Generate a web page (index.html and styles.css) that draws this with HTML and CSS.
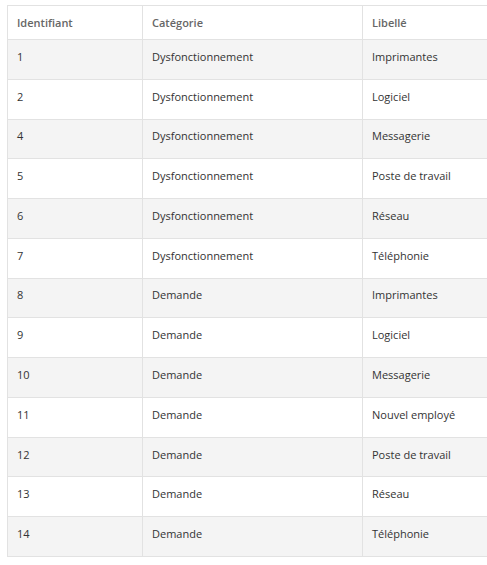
FILE: index.html
```html
<!DOCTYPE html>
<html lang="fr">
<head>
<meta charset="utf-8">
<link rel="stylesheet" href="styles.css">
</head>
<body>
<div class="wrap">
<table class="grid">
<thead>
<tr><th class="c1">Identifiant</th><th class="c2">Catégorie</th><th class="c3">Libellé</th></tr>
</thead>
<tbody>
<tr><td>1</td><td>Dysfonctionnement</td><td>Imprimantes</td></tr>
<tr><td>2</td><td>Dysfonctionnement</td><td>Logiciel</td></tr>
<tr><td>4</td><td>Dysfonctionnement</td><td>Messagerie</td></tr>
<tr><td>5</td><td>Dysfonctionnement</td><td>Poste de travail</td></tr>
<tr><td>6</td><td>Dysfonctionnement</td><td>Réseau</td></tr>
<tr><td>7</td><td>Dysfonctionnement</td><td>Téléphonie</td></tr>
<tr><td>8</td><td>Demande</td><td>Imprimantes</td></tr>
<tr><td>9</td><td>Demande</td><td>Logiciel</td></tr>
<tr><td>10</td><td>Demande</td><td>Messagerie</td></tr>
<tr><td>11</td><td>Demande</td><td>Nouvel employé</td></tr>
<tr><td>12</td><td>Demande</td><td>Poste de travail</td></tr>
<tr><td>13</td><td>Demande</td><td>Réseau</td></tr>
<tr><td>14</td><td>Demande</td><td>Téléphonie</td></tr>
</tbody>
</table>
</div>
</body>
</html>
```
FILE: styles.css
```css
html, body {
  margin: 0;
  padding: 0;
  background: #fff;
  overflow: hidden;
}
.wrap {
  padding: 5px 0 0 7px;
  overflow: hidden;
}
.grid {
  border-collapse: collapse;
  table-layout: fixed;
  width: 620px;
  font-family: "Open Sans", sans-serif;
  font-size: 11px;
  color: #333;
}
.grid th, .grid td {
  border: 1px solid #e2e2e2;
  text-align: left;
  padding: 0 9px;
  white-space: nowrap;
  box-sizing: border-box;
}
.grid th {
  font-weight: 600;
  color: #666;
  height: 34px;
}
.grid td {
  height: 39.77px;
  padding-bottom: 6px;
}
.grid tbody tr:nth-child(odd) {
  background: #f4f4f4;
}
.c1 { width: 135px; }
.c2 { width: 220px; }
```
